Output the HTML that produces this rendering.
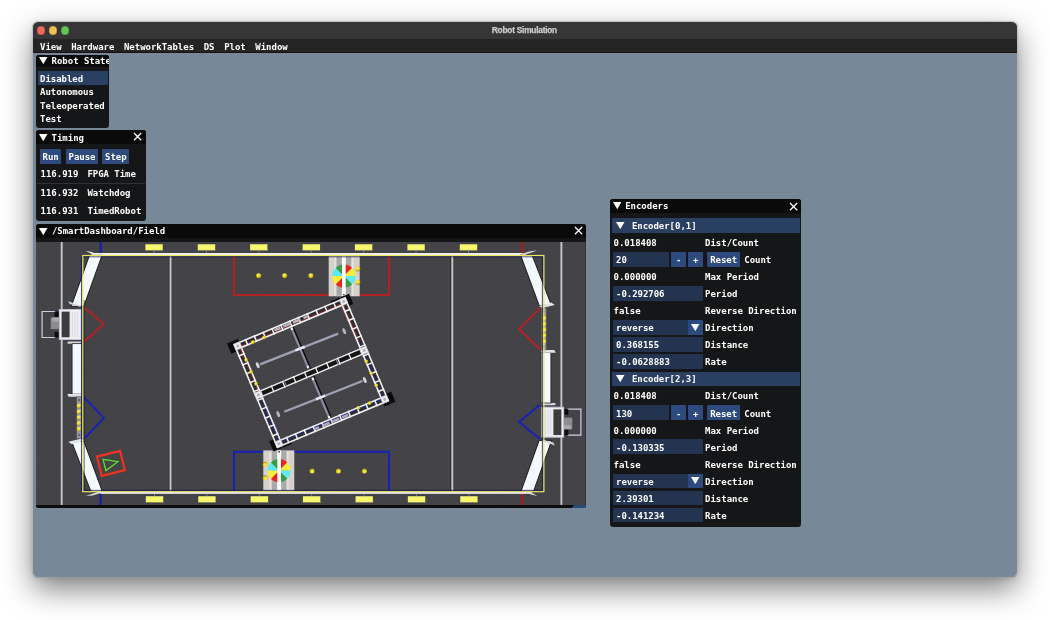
<!DOCTYPE html>
<html><head><meta charset="utf-8"><title>Robot Simulation</title>
<style>
html,body{margin:0;padding:0;background:#fff;}
body{width:1050px;height:620px;position:relative;overflow:hidden;}
#app div,#app span,#app svg{position:absolute;}
#app{position:absolute;left:33px;top:22px;width:984px;height:555px;border-radius:5.5px;background:#778899;
 box-shadow:0 0 0 0.6px rgba(255,255,255,.55),0 0 0 1.1px rgba(0,0,0,.22),0 12px 30px rgba(0,0,0,.50),0 1px 6px rgba(0,0,0,.12);}
#clip{position:absolute;left:0;top:0;width:984px;height:555px;border-radius:5.5px;overflow:hidden;}
#ui{position:absolute;left:-33px;top:-22px;width:1050px;height:620px;will-change:transform;}
.t{font-family:'DejaVu Sans Mono','Liberation Mono',monospace;font-size:9.0px;font-weight:bold;line-height:11px;height:11px;white-space:pre;letter-spacing:-0.028px;color:#fff;}
.tt{font-family:'Liberation Sans',sans-serif;font-size:8.3px;font-weight:bold;line-height:11px;height:11px;white-space:pre;color:#cfcfcf;letter-spacing:-0.22px;-webkit-text-stroke:0.25px #cfcfcf;}
</style></head><body>
<div id="app"><div id="clip"><div id="ui">
<div style="left:33.00px;top:22.00px;width:984.00px;height:16.60px;background:#363636;"></div>
<div style="left:33.00px;top:38.60px;width:984.00px;height:13.50px;background:#242424;"></div>
<div style="left:33.00px;top:52.10px;width:984.00px;height:0.90px;background:#1c1010;"></div>
<div style="left:37.00px;top:26.30px;width:8.4px;height:8.4px;border-radius:50%;background:#ed6a5e;box-shadow:inset 0 0 0 0.5px rgba(0,0,0,.28)"></div>
<div style="left:48.80px;top:26.30px;width:8.4px;height:8.4px;border-radius:50%;background:#f5bf4f;box-shadow:inset 0 0 0 0.5px rgba(0,0,0,.28)"></div>
<div style="left:60.80px;top:26.30px;width:8.4px;height:8.4px;border-radius:50%;background:#61c554;box-shadow:inset 0 0 0 0.5px rgba(0,0,0,.28)"></div>
<span class="tt" style="left:424.4px;top:24.6px;width:200px;text-align:center">Robot Simulation</span>
<span class="t" style="left:40.00px;top:41.90px;color:#fff">View</span>
<span class="t" style="left:71.21px;top:41.90px;color:#fff">Hardware</span>
<span class="t" style="left:123.98px;top:41.90px;color:#fff">NetworkTables</span>
<span class="t" style="left:203.70px;top:41.90px;color:#fff">DS</span>
<span class="t" style="left:224.13px;top:41.90px;color:#fff">Plot</span>
<span class="t" style="left:255.34px;top:41.90px;color:#fff">Window</span>
<div style="left:36.00px;top:54.50px;width:72.60px;height:73.00px;background:#151617;border-radius:3px;overflow:hidden"><div style="left:0;top:0;width:100%;height:12.5px;background:#0a0a0a"></div><span class="t" style="left:15.6px;top:1.40px">Robot State</span></div>
<svg style="left:39.00px;top:56.95px" width="8.50" height="7.20" viewBox="0 0 8.50 7.20"><polygon points="0,0 8.50,0 4.25,7.20" fill="#fff"/></svg>
<div style="left:37.50px;top:71.00px;width:70.60px;height:13.50px;background:#2a4063;"></div>
<span class="t" style="left:40.00px;top:73.90px;color:#fff">Disabled</span>
<span class="t" style="left:40.00px;top:87.40px;color:#fff">Autonomous</span>
<span class="t" style="left:40.00px;top:100.90px;color:#fff">Teleoperated</span>
<span class="t" style="left:40.00px;top:114.40px;color:#fff">Test</span>
<div style="left:36.00px;top:130.00px;width:109.50px;height:91.00px;background:#151617;border-radius:3px;overflow:hidden"><div style="left:0;top:0;width:100%;height:14px;background:#0a0a0a"></div><span class="t" style="left:15.6px;top:2.70px">Timing</span></div>
<svg style="left:39.00px;top:133.55px" width="8.50" height="7.20" viewBox="0 0 8.50 7.20"><polygon points="0,0 8.50,0 4.25,7.20" fill="#fff"/></svg>
<svg style="left:133.30px;top:132.40px" width="9.20" height="9.20"><path d="M1 1 L8.20 8.20 M8.20 1 L1 8.20" stroke="#fff" stroke-width="1.25" fill="none"/></svg>
<div style="left:39.70px;top:148.50px;width:21.80px;height:15.40px;background:#2c4a7c;"></div>
<span class="t" style="left:42.50px;top:151.90px;color:#fff">Run</span>
<div style="left:65.70px;top:148.50px;width:32.40px;height:15.40px;background:#2c4a7c;"></div>
<span class="t" style="left:68.50px;top:151.90px;color:#fff">Pause</span>
<div style="left:102.20px;top:148.50px;width:27.10px;height:15.40px;background:#2c4a7c;"></div>
<span class="t" style="left:105.00px;top:151.90px;color:#fff">Step</span>
<span class="t" style="left:40.60px;top:168.90px;color:#fff">116.919</span>
<span class="t" style="left:87.40px;top:168.90px;color:#fff">FPGA Time</span>
<div style="left:37.00px;top:182.60px;width:107.50px;height:0.80px;background:#303036;"></div>
<span class="t" style="left:40.60px;top:188.40px;color:#fff">116.932</span>
<span class="t" style="left:87.40px;top:188.40px;color:#fff">Watchdog</span>
<span class="t" style="left:40.60px;top:205.70px;color:#fff">116.931</span>
<span class="t" style="left:87.40px;top:205.70px;color:#fff">TimedRobot</span>
<div style="left:609.60px;top:199.30px;width:191.60px;height:327.60px;background:#151617;border-radius:3px;overflow:hidden"><div style="left:0;top:0;width:100%;height:13.5px;background:#0a0a0a"></div><span class="t" style="left:15.6px;top:2.00px">Encoders</span></div>
<svg style="left:612.60px;top:202.45px" width="8.50" height="7.20" viewBox="0 0 8.50 7.20"><polygon points="0,0 8.50,0 4.25,7.20" fill="#fff"/></svg>
<svg style="left:789.00px;top:201.70px" width="9.20" height="9.20"><path d="M1 1 L8.20 8.20 M8.20 1 L1 8.20" stroke="#fff" stroke-width="1.25" fill="none"/></svg>
<div style="left:611.60px;top:218.20px;width:188.10px;height:14.50px;background:#2a4063;"></div>
<svg style="left:616.40px;top:221.95px" width="8.50" height="7.20" viewBox="0 0 8.50 7.20"><polygon points="0,0 8.50,0 4.25,7.20" fill="#fff"/></svg>
<span class="t" style="left:631.90px;top:221.00px;color:#fff">Encoder[0,1]</span>
<span class="t" style="left:613.60px;top:238.05px;color:#fff">0.018408</span>
<span class="t" style="left:705.10px;top:238.05px;color:#fff">Dist/Count</span>
<div style="left:613.10px;top:251.90px;width:56.00px;height:14.80px;background:#22344f;"></div>
<span class="t" style="left:616.00px;top:255.10px;color:#fff">20</span>
<div style="left:671.10px;top:251.90px;width:14.80px;height:14.80px;background:#2c4a7c;"></div>
<span class="t" style="left:675.90px;top:255.10px;color:#fff">-</span>
<div style="left:688.00px;top:251.90px;width:15.00px;height:14.80px;background:#2c4a7c;"></div>
<span class="t" style="left:692.90px;top:255.10px;color:#fff">+</span>
<div style="left:707.40px;top:251.90px;width:32.20px;height:14.80px;background:#2c4a7c;"></div>
<span class="t" style="left:710.20px;top:255.10px;color:#fff">Reset</span>
<span class="t" style="left:744.30px;top:255.10px;color:#fff">Count</span>
<span class="t" style="left:613.60px;top:272.15px;color:#fff">0.000000</span>
<span class="t" style="left:705.10px;top:272.15px;color:#fff">Max Period</span>
<div style="left:613.10px;top:286.00px;width:89.90px;height:14.80px;background:#22344f;"></div>
<span class="t" style="left:616.00px;top:289.20px;color:#fff">-0.292706</span>
<span class="t" style="left:705.10px;top:289.20px;color:#fff">Period</span>
<span class="t" style="left:613.60px;top:306.25px;color:#fff">false</span>
<span class="t" style="left:705.10px;top:306.25px;color:#fff">Reverse Direction</span>
<div style="left:613.10px;top:320.10px;width:74.90px;height:14.80px;background:#22344f;"></div>
<div style="left:688.00px;top:320.10px;width:15.00px;height:14.80px;background:#2c4a7c;"></div>
<span class="t" style="left:616.00px;top:323.30px;color:#fff">reverse</span>
<span class="t" style="left:705.10px;top:323.30px;color:#fff">Direction</span>
<svg style="left:691.20px;top:323.85px" width="8.50" height="7.20" viewBox="0 0 8.50 7.20"><polygon points="0,0 8.50,0 4.25,7.20" fill="#fff"/></svg>
<div style="left:613.10px;top:337.15px;width:89.90px;height:14.80px;background:#22344f;"></div>
<span class="t" style="left:616.00px;top:340.35px;color:#fff">0.368155</span>
<span class="t" style="left:705.10px;top:340.35px;color:#fff">Distance</span>
<div style="left:613.10px;top:354.20px;width:89.90px;height:14.80px;background:#22344f;"></div>
<span class="t" style="left:616.00px;top:357.40px;color:#fff">-0.0628883</span>
<span class="t" style="left:705.10px;top:357.40px;color:#fff">Rate</span>
<div style="left:611.60px;top:371.60px;width:188.10px;height:14.50px;background:#2a4063;"></div>
<svg style="left:616.40px;top:375.35px" width="8.50" height="7.20" viewBox="0 0 8.50 7.20"><polygon points="0,0 8.50,0 4.25,7.20" fill="#fff"/></svg>
<span class="t" style="left:631.90px;top:374.40px;color:#fff">Encoder[2,3]</span>
<span class="t" style="left:613.60px;top:391.45px;color:#fff">0.018408</span>
<span class="t" style="left:705.10px;top:391.45px;color:#fff">Dist/Count</span>
<div style="left:613.10px;top:405.30px;width:56.00px;height:14.80px;background:#22344f;"></div>
<span class="t" style="left:616.00px;top:408.50px;color:#fff">130</span>
<div style="left:671.10px;top:405.30px;width:14.80px;height:14.80px;background:#2c4a7c;"></div>
<span class="t" style="left:675.90px;top:408.50px;color:#fff">-</span>
<div style="left:688.00px;top:405.30px;width:15.00px;height:14.80px;background:#2c4a7c;"></div>
<span class="t" style="left:692.90px;top:408.50px;color:#fff">+</span>
<div style="left:707.40px;top:405.30px;width:32.20px;height:14.80px;background:#2c4a7c;"></div>
<span class="t" style="left:710.20px;top:408.50px;color:#fff">Reset</span>
<span class="t" style="left:744.30px;top:408.50px;color:#fff">Count</span>
<span class="t" style="left:613.60px;top:425.55px;color:#fff">0.000000</span>
<span class="t" style="left:705.10px;top:425.55px;color:#fff">Max Period</span>
<div style="left:613.10px;top:439.40px;width:89.90px;height:14.80px;background:#22344f;"></div>
<span class="t" style="left:616.00px;top:442.60px;color:#fff">-0.130335</span>
<span class="t" style="left:705.10px;top:442.60px;color:#fff">Period</span>
<span class="t" style="left:613.60px;top:459.65px;color:#fff">false</span>
<span class="t" style="left:705.10px;top:459.65px;color:#fff">Reverse Direction</span>
<div style="left:613.10px;top:473.50px;width:74.90px;height:14.80px;background:#22344f;"></div>
<div style="left:688.00px;top:473.50px;width:15.00px;height:14.80px;background:#2c4a7c;"></div>
<span class="t" style="left:616.00px;top:476.70px;color:#fff">reverse</span>
<span class="t" style="left:705.10px;top:476.70px;color:#fff">Direction</span>
<svg style="left:691.20px;top:477.25px" width="8.50" height="7.20" viewBox="0 0 8.50 7.20"><polygon points="0,0 8.50,0 4.25,7.20" fill="#fff"/></svg>
<div style="left:613.10px;top:490.55px;width:89.90px;height:14.80px;background:#22344f;"></div>
<span class="t" style="left:616.00px;top:493.75px;color:#fff">2.39301</span>
<span class="t" style="left:705.10px;top:493.75px;color:#fff">Distance</span>
<div style="left:613.10px;top:507.60px;width:89.90px;height:14.80px;background:#22344f;"></div>
<span class="t" style="left:616.00px;top:510.80px;color:#fff">-0.141234</span>
<span class="t" style="left:705.10px;top:510.80px;color:#fff">Rate</span>
<div style="left:36.30px;top:224.00px;width:549.70px;height:283.70px;background:#151617;border-radius:3px;overflow:hidden"><div style="left:0;top:0;width:100%;height:14px;background:#0a0a0a"></div><span class="t" style="left:15.6px;top:2.20px">/SmartDashboard/Field</span></div>
<svg style="left:39.30px;top:227.55px" width="8.50" height="7.20" viewBox="0 0 8.50 7.20"><polygon points="0,0 8.50,0 4.25,7.20" fill="#fff"/></svg>
<svg style="left:573.80px;top:226.40px" width="9.20" height="9.20"><path d="M1 1 L8.20 8.20 M8.20 1 L1 8.20" stroke="#fff" stroke-width="1.25" fill="none"/></svg>
<svg style="left:36.3px;top:241.9px" width="549.70" height="263.10" viewBox="36.3 241.9 549.70 263.10">
<defs>
<pattern id="cp" width="3" height="3" patternUnits="userSpaceOnUse"><rect width="3" height="3" fill="#454549"/><path d="M0 3L3 0" stroke="#3a3a3e" stroke-width="0.9"/><path d="M0 0L3 3" stroke="#4d4d52" stroke-width="0.5"/></pattern>
<g id="half">
<rect x="145.4" y="243.9" width="17.9" height="6.7" fill="#f6f56c" stroke="#2a2a50" stroke-width="0.4"/>
<path d="M154.4 249.5v3" stroke="#a8a8a0" stroke-width="0.6"/>
<rect x="197.8" y="243.9" width="17.9" height="6.7" fill="#f6f56c" stroke="#2a2a50" stroke-width="0.4"/>
<path d="M206.8 249.5v3" stroke="#a8a8a0" stroke-width="0.6"/>
<rect x="250.2" y="243.9" width="17.9" height="6.7" fill="#f6f56c" stroke="#2a2a50" stroke-width="0.4"/>
<path d="M259.2 249.5v3" stroke="#a8a8a0" stroke-width="0.6"/>
<rect x="302.6" y="243.9" width="17.9" height="6.7" fill="#f6f56c" stroke="#2a2a50" stroke-width="0.4"/>
<path d="M311.6 249.5v3" stroke="#a8a8a0" stroke-width="0.6"/>
<rect x="355.0" y="243.9" width="17.9" height="6.7" fill="#f6f56c" stroke="#2a2a50" stroke-width="0.4"/>
<path d="M364.0 249.5v3" stroke="#a8a8a0" stroke-width="0.6"/>
<rect x="407.4" y="243.9" width="17.9" height="6.7" fill="#f6f56c" stroke="#2a2a50" stroke-width="0.4"/>
<path d="M416.4 249.5v3" stroke="#a8a8a0" stroke-width="0.6"/>
<rect x="459.8" y="243.9" width="17.9" height="6.7" fill="#f6f56c" stroke="#2a2a50" stroke-width="0.4"/>
<path d="M468.8 249.5v3" stroke="#a8a8a0" stroke-width="0.6"/>
<path d="M92 253.8H523" stroke="#f0f0f0" stroke-width="2"/>
<g>
<rect x="329" y="256" width="31" height="40.2" fill="#d6d2cb"/>
<rect x="336.6" y="256.6" width="5.4" height="39" fill="#a9a9aa"/>
<rect x="346.2" y="256.6" width="5.6" height="39" fill="#a9a9aa"/>
<rect x="334.6" y="256.6" width="2" height="39" fill="#e6e3dd"/>
<rect x="351.8" y="256.6" width="2" height="39" fill="#e6e3dd"/>
<path d="M344.2 276.0L344.20 264.40A11.6 11.6 0 0 1 352.40 267.80Z" fill="#e8241f"/>
<path d="M344.2 276.0L352.40 267.80A11.6 11.6 0 0 1 355.80 276.00Z" fill="#f7ee3a"/>
<path d="M344.2 276.0L355.80 276.00A11.6 11.6 0 0 1 352.40 284.20Z" fill="#5fe9f2"/>
<path d="M344.2 276.0L352.40 284.20A11.6 11.6 0 0 1 344.20 287.60Z" fill="#3a9b45"/>
<path d="M344.2 276.0L344.20 287.60A11.6 11.6 0 0 1 336.00 284.20Z" fill="#e8241f"/>
<path d="M344.2 276.0L336.00 284.20A11.6 11.6 0 0 1 332.60 276.00Z" fill="#f7ee3a"/>
<path d="M344.2 276.0L332.60 276.00A11.6 11.6 0 0 1 336.00 267.80Z" fill="#5fe9f2"/>
<path d="M344.2 276.0L336.00 267.80A11.6 11.6 0 0 1 344.20 264.40Z" fill="#3a9b45"/>
<rect x="342.3" y="256" width="3.7" height="40.2" fill="#fafafa"/>
<circle cx="344.2" cy="294.7" r="0.8" fill="#111"/>
</g>
<circle cx="259.0" cy="275.6" r="2.5" fill="url(#ball)"/>
<circle cx="285.0" cy="275.6" r="2.5" fill="url(#ball)"/>
<circle cx="311.3" cy="275.6" r="2.5" fill="url(#ball)"/>
<circle cx="358.2" cy="268.8" r="2.5" fill="url(#ball)"/>
<circle cx="358.2" cy="282.3" r="2.5" fill="url(#ball)"/>
<path d="M89.8 255.2L102.3 255.2L84.1 306.2L71.6 306.2Z" fill="#f4f9ff" stroke="#111" stroke-width="0.9" stroke-linejoin="round"/>
<path d="M86 250.7L93 254.6L100 255.2L92 252Z" fill="#e4e4ea"/>
<path d="M68.4 301.2L81 305.6L81 307L70 304Z" fill="#d4d6e0"/>
<rect x="59.6" y="309.4" width="21.9" height="30" fill="#eeeef3" stroke="#c5c6dd" stroke-width="0.9"/>
<rect x="61.9" y="311.5" width="8" height="25.7" fill="#3c3c3e"/>
<path d="M72.6 312v25" stroke="#d2d2d8" stroke-width="0.8"/>
<path d="M75.2 312v25" stroke="#d2d2d8" stroke-width="0.8"/>
<path d="M77.8 312v25" stroke="#d2d2d8" stroke-width="0.8"/>
<path d="M55.8 311.4H42.4V337.4H55.8" fill="none" stroke="#cfcfe4" stroke-width="1.2"/>
<rect x="54.9" y="311.4" width="3.9" height="5.6" fill="#0c0c0c"/>
<rect x="54.9" y="331.8" width="3.9" height="5.6" fill="#0c0c0c"/>
<rect x="51" y="317.4" width="8.4" height="11.6" fill="#8c8c8e"/>
<rect x="52.5" y="317.4" width="6.9" height="4" fill="#a9a9ab"/>
<path d="M67.9 341.4H81.6V343.6H67.9Z" fill="#d4d6e0"/>
<rect x="72.4" y="343.6" width="9.8" height="50.4" fill="#f4f9ff" stroke="#111" stroke-width="0.7"/>
<path d="M67.5 393.8H82V396.6H69Z" fill="#e2e4ec"/>
<rect x="77.1" y="396.6" width="4.6" height="41.8" fill="#9a9a9c" stroke="#5a5a5c" stroke-width="0.5"/>
<circle cx="79.4" cy="400" r="1.3" fill="#6a6a6c"/><circle cx="79.4" cy="435" r="1.3" fill="#6a6a6c"/>
<circle cx="79.4" cy="405.8" r="2.3" fill="url(#ball)"/>
<circle cx="79.4" cy="411.6" r="2.3" fill="url(#ball)"/>
<circle cx="79.4" cy="417.4" r="2.3" fill="url(#ball)"/>
<circle cx="79.4" cy="423.2" r="2.3" fill="url(#ball)"/>
<circle cx="79.4" cy="429.0" r="2.3" fill="url(#ball)"/>
<path d="M72.2 442.2L84.0 440.8L102.7 491.6L91.6 492.4Z" fill="#f4f9ff" stroke="#111" stroke-width="0.9" stroke-linejoin="round"/>
<path d="M68.6 441.6L81 438.6L84.4 440.6L72 444.2Z" fill="#e2e4ec"/>
<path d="M86 496L100 491.2L102 492.6L93 495.4Z" fill="#d8dae4"/>
</g>
<radialGradient id="ball" cx="0.4" cy="0.35" r="0.7"><stop offset="0" stop-color="#fff27a"/><stop offset="0.55" stop-color="#e6d31c"/><stop offset="1" stop-color="#8a7d10"/></radialGradient>
</defs>
<rect x="36.3" y="241.9" width="549.70" height="263.10" fill="url(#cp)"/>
<path d="M62.0 241.9V505.0" stroke="#c6c6c6" stroke-width="1.9"/>
<path d="M561.7 241.9V505.0" stroke="#c6c6c6" stroke-width="1.9"/>
<path d="M169.60000000000002 255V492" stroke="#1a1a2a" stroke-width="0.8"/>
<path d="M170.8 255V492" stroke="#c6c6c6" stroke-width="1.9"/>
<path d="M451.40000000000003 255V492" stroke="#1a1a2a" stroke-width="0.8"/>
<path d="M452.6 255V492" stroke="#c6c6c6" stroke-width="1.9"/>
<path d="M101 241.9V254" stroke="#1420a8" stroke-width="2.2"/>
<path d="M101 492.5V505.0" stroke="#1420a8" stroke-width="2.2"/>
<path d="M522.6 241.9V254" stroke="#a81c1c" stroke-width="2.2"/>
<path d="M522.6 492.5V505.0" stroke="#a81c1c" stroke-width="2.2"/>
<path d="M234.3 256V295H389.4V256" fill="none" stroke="#b32222" stroke-width="2"/>
<path d="M234.3 491V451.6H389.4V491" fill="none" stroke="#1622b4" stroke-width="2"/>
<use href="#half"/>
<use href="#half" transform="rotate(180 311.8 373.25)"/>
<path d="M84.4 307.2L104.2 324.2L84.4 341.4" fill="none" stroke="#b32222" stroke-width="2"/>
<path d="M84.4 397.2L104.2 417.8L84.4 438.8" fill="none" stroke="#1622b4" stroke-width="2"/>
<path d="M540.2 307.8L519.4 329.2L540.2 349.2" fill="none" stroke="#b32222" stroke-width="2"/>
<path d="M540.2 404.6L519.4 421.9L540.2 438.9" fill="none" stroke="#1622b4" stroke-width="2"/>
<g transform="translate(311.55 372.55) rotate(-22.8)">
<rect x="-66.4" y="-59.5" width="12" height="11" fill="#0b0b0b"/>
<rect x="54.4" y="48.5" width="12" height="11" fill="#0b0b0b"/>
<rect x="56.4" y="-58.0" width="9" height="11" fill="#0b0b0b"/>
<rect x="-65.4" y="47.0" width="9" height="11" fill="#0b0b0b"/>
<rect x="45.4" y="-58.2" width="10" height="3" fill="#0b0b0b"/>
<rect x="-55.4" y="55.2" width="10" height="3" fill="#0b0b0b"/>
<path d="M1.0 -49.5V49.5" stroke="#0a0a0a" stroke-width="1.3"/>
<path d="M-1.0 -48.5V-5" stroke="#8d8fa8" stroke-width="2"/>
<path d="M-1.0 5V48.5" stroke="#8d8fa8" stroke-width="2"/>
<g transform="rotate(1.3 0 -26.5)">
<path d="M-44 -26.5H40" stroke="#9da1b6" stroke-width="2.3"/>
<path d="M-6 -26.5H4" stroke="#e4e6f2" stroke-width="2.5"/>
<ellipse cx="-46.5" cy="-26.5" rx="1.5" ry="3.2" fill="#d8d8dc"/>
<ellipse cx="46.5" cy="-26.5" rx="1.5" ry="3.2" fill="#b4b4bc"/>
</g>
<g transform="rotate(1.3 0 26.5)">
<path d="M-40 26.5H44" stroke="#9da1b6" stroke-width="2.3"/>
<path d="M-6 26.5H4" stroke="#e4e6f2" stroke-width="2.5"/>
<ellipse cx="-46.5" cy="26.5" rx="1.5" ry="3.2" fill="#b4b4bc"/>
<ellipse cx="46.5" cy="26.5" rx="1.5" ry="3.2" fill="#d8d8dc"/>
</g>
<circle cx="-0.8" cy="-48.0" r="1.3" fill="#f4f4f4"/>
<circle cx="-0.8" cy="-6.5" r="1.3" fill="#f4f4f4"/>
<circle cx="-0.8" cy="6.5" r="1.3" fill="#f4f4f4"/>
<circle cx="-0.8" cy="48.0" r="1.3" fill="#f4f4f4"/>
<path d="M-60.9 -56.5H60.9V56.5H-60.9Z M-53.9 -49.5V49.5H53.9V-49.5Z" fill="#2e2e31" fill-rule="evenodd"/>
<path d="M-58.699999999999996 8V-54.3H58.699999999999996V-8" transform="scale(1)" fill="none" stroke="none"/>
<path d="M-56.1 6V-51.7H56.1V-10" fill="none" stroke="#9c2222" stroke-width="0.85"/>
<path d="M-56.1 6V51.7H56.1V-10" fill="none" stroke="#1c2aa2" stroke-width="0.85"/>
<rect x="-60.1" y="-55.7" width="120.2" height="111.4" fill="none" stroke="#f2f2f4" stroke-width="1.6"/>
<rect x="-54.699999999999996" y="-50.3" width="109.39999999999999" height="100.6" fill="none" stroke="#f2f2f4" stroke-width="1.6"/>
<path d="M-47.8 -56.5v7.0M-47.8 49.5v7.0M-38.3 -56.5v7.0M-38.3 49.5v7.0M-28.7 -56.5v7.0M-28.7 49.5v7.0M-19.1 -56.5v7.0M-19.1 49.5v7.0M-9.6 -56.5v7.0M-9.6 49.5v7.0M0.0 -56.5v7.0M0.0 49.5v7.0M9.6 -56.5v7.0M9.6 49.5v7.0M19.1 -56.5v7.0M19.1 49.5v7.0M28.7 -56.5v7.0M28.7 49.5v7.0M38.3 -56.5v7.0M38.3 49.5v7.0M47.8 -56.5v7.0M47.8 49.5v7.0M-60.9 -43.4h7.0M53.9 -43.4h7.0M-60.9 -33.7h7.0M53.9 -33.7h7.0M-60.9 -24.1h7.0M53.9 -24.1h7.0M-60.9 -14.5h7.0M53.9 -14.5h7.0M-60.9 -4.8h7.0M53.9 -4.8h7.0M-60.9 4.8h7.0M53.9 4.8h7.0M-60.9 14.5h7.0M53.9 14.5h7.0M-60.9 24.1h7.0M53.9 24.1h7.0M-60.9 33.7h7.0M53.9 33.7h7.0M-60.9 43.4h7.0M53.9 43.4h7.0" stroke="#f2f2f4" stroke-width="1.5"/>
<rect x="-17.5" y="-54.6" width="6.5" height="2.6" fill="#b9b3ba"/>
<rect x="11" y="52.0" width="6.5" height="2.6" fill="#a9a9c4"/>
<rect x="-8" y="-54.6" width="8" height="2.6" fill="#b9b3ba"/>
<rect x="0" y="52.0" width="8" height="2.6" fill="#a9a9c4"/>
<rect x="2.5" y="-54.6" width="8.0" height="2.6" fill="#b9b3ba"/>
<rect x="-10.5" y="52.0" width="8.0" height="2.6" fill="#a9a9c4"/>
<rect x="14" y="-54.6" width="5" height="2.6" fill="#b9b3ba"/>
<rect x="-19" y="52.0" width="5" height="2.6" fill="#a9a9c4"/>
<rect x="-53.9" y="-2.85" width="107.8" height="5.7" fill="#161616" stroke="#f2f2f4" stroke-width="1.4"/>
<path d="M-41.9 -3.6v7.2M-29.9 -3.6v7.2M-18.0 -3.6v7.2M-6.0 -3.6v7.2M6.0 -3.6v7.2M18.0 -3.6v7.2M29.9 -3.6v7.2M41.9 -3.6v7.2" stroke="#f2f2f4" stroke-width="1.3"/>
<path d="M-28 -3.6v7.2M28 -3.6v7.2" stroke="#8f8fa0" stroke-width="0.9"/>
<rect x="-60.699999999999996" y="-56.3" width="6.6" height="6.6" fill="#f1f1f4" stroke="#c4c4cc" stroke-width="0.6"/>
<rect x="-58.8" y="-54.4" width="2.8" height="2.8" fill="#b4b4c0"/>
<rect x="54.1" y="-56.3" width="6.6" height="6.6" fill="#f1f1f4" stroke="#c4c4cc" stroke-width="0.6"/>
<rect x="56.0" y="-54.4" width="2.8" height="2.8" fill="#b4b4c0"/>
<rect x="-60.699999999999996" y="49.7" width="6.6" height="6.6" fill="#f1f1f4" stroke="#c4c4cc" stroke-width="0.6"/>
<rect x="-58.8" y="51.6" width="2.8" height="2.8" fill="#b4b4c0"/>
<rect x="54.1" y="49.7" width="6.6" height="6.6" fill="#f1f1f4" stroke="#c4c4cc" stroke-width="0.6"/>
<rect x="56.0" y="51.6" width="2.8" height="2.8" fill="#b4b4c0"/>
<rect x="-60.699999999999996" y="-3.3" width="6.6" height="6.6" fill="#f1f1f4" stroke="#c4c4cc" stroke-width="0.6"/>
<rect x="-58.8" y="-1.4" width="2.8" height="2.8" fill="#b4b4c0"/>
<rect x="54.1" y="-3.3" width="6.6" height="6.6" fill="#f1f1f4" stroke="#c4c4cc" stroke-width="0.6"/>
<rect x="56.0" y="-1.4" width="2.8" height="2.8" fill="#b4b4c0"/>
<circle cx="-42" cy="-50.7" r="1.8" fill="url(#ball)"/>
<circle cx="-30" cy="-50.7" r="1.8" fill="url(#ball)"/>
<circle cx="-55.1" cy="-37" r="1.8" fill="url(#ball)"/>
<circle cx="-55.1" cy="-24" r="1.8" fill="url(#ball)"/>
<circle cx="-55.1" cy="-11" r="1.8" fill="url(#ball)"/>
<circle cx="55.1" cy="37" r="1.8" fill="url(#ball)"/>
<circle cx="55.1" cy="24" r="1.8" fill="url(#ball)"/>
<circle cx="55.1" cy="11" r="1.8" fill="url(#ball)"/>
<circle cx="42" cy="50.7" r="1.8" fill="url(#ball)"/>
<circle cx="30" cy="50.7" r="1.8" fill="url(#ball)"/>
</g>
<path d="M81.8 256.8V490.3M84.4 300V490.3M81.8 256.7H542.7V490.3H84.4" fill="none" stroke="#10105a" stroke-width="0.9" opacity="0.85"/>
<rect x="83.1" y="255.4" width="461.1" height="236.2" fill="none" stroke="#ece85c" stroke-width="1.2"/>
<path d="M101 492.9H532" stroke="#dcdcdc" stroke-width="1.5"/>
<g transform="translate(111.2 463.3) rotate(-14)">
<rect x="-11.9" y="-9.9" width="23.8" height="19.8" fill="none" stroke="#ee3322" stroke-width="2.2"/>
<path d="M-6.6 -5.8L7.2 0L-6.6 5.8Z" fill="none" stroke="#5fe32e" stroke-width="1.3" stroke-linejoin="miter"/>
</g>
</svg>
<div style="left:36.30px;top:504.80px;width:549.70px;height:2.90px;background:#0c0c0c;border-radius:0 0 3px 3px"></div>
<svg style="left:571px;top:504.6px" width="15" height="3.2"><path d="M3.2 0H14.9V1.6Q14.9 3.1 12.6 3.1H0.6Z" fill="#2b4a78"/></svg>
</div></div></div></body></html>
